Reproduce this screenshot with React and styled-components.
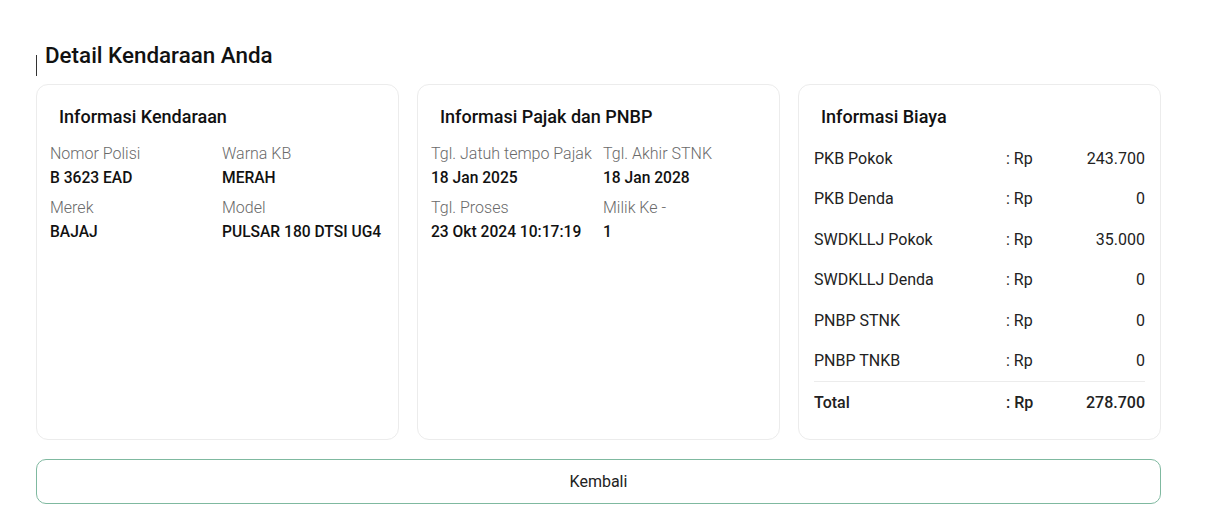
import React from "react";
import styled, { createGlobalStyle } from "styled-components";

const GlobalStyle = createGlobalStyle`
  body {
    margin: 0;
    background: #ffffff;
    font-family: Roboto, "Liberation Sans", Arial, sans-serif;
    color: #111111;
  }
`;

const vehicle = [
  { label: "Nomor Polisi", value: "B 3623 EAD" },
  { label: "Warna KB", value: "MERAH" },
  { label: "Merek", value: "BAJAJ" },
  { label: "Model", value: "PULSAR 180 DTSI UG4" },
];

const tax = [
  { label: "Tgl. Jatuh tempo Pajak", value: "18 Jan 2025" },
  { label: "Tgl. Akhir STNK", value: "18 Jan 2028" },
  { label: "Tgl. Proses", value: "23 Okt 2024 10:17:19" },
  { label: "Milik Ke -", value: "1" },
];

const costs = [
  { label: "PKB Pokok", amount: "243.700" },
  { label: "PKB Denda", amount: "0" },
  { label: "SWDKLLJ Pokok", amount: "35.000" },
  { label: "SWDKLLJ Denda", amount: "0" },
  { label: "PNBP STNK", amount: "0" },
  { label: "PNBP TNKB", amount: "0" },
];

export default function App() {
  return (
    <>
      <GlobalStyle />
      <Page>
        <Header>
          <Caret />
          <Title>Detail Kendaraan Anda</Title>
        </Header>
        <Cards>
          <Card>
            <CardTitle>Informasi Kendaraan</CardTitle>
            <FieldGrid>
              {vehicle.map((f) => (
                <Field key={f.label}>
                  <Label>{f.label}</Label>
                  <Value>{f.value}</Value>
                </Field>
              ))}
            </FieldGrid>
          </Card>
          <Card>
            <CardTitle>Informasi Pajak dan PNBP</CardTitle>
            <FieldGrid>
              {tax.map((f) => (
                <Field key={f.label}>
                  <Label>{f.label}</Label>
                  <Value>{f.value}</Value>
                </Field>
              ))}
            </FieldGrid>
          </Card>
          <Card>
            <CardTitle>Informasi Biaya</CardTitle>
            <CostTable>
              {costs.map((c) => (
                <CostRow key={c.label}>
                  <span>{c.label}</span>
                  <span>: Rp</span>
                  <Amount>{c.amount}</Amount>
                </CostRow>
              ))}
              <CostRow $total>
                <span>Total</span>
                <span>: Rp</span>
                <Amount>278.700</Amount>
              </CostRow>
            </CostTable>
          </Card>
        </Cards>
        <BackButton type="button">Kembali</BackButton>
      </Page>
    </>
  );
}

const Page = styled.div`
  padding: 40px 59px 10px 36px;
  display: flex;
  flex-direction: column;
`;

const Header = styled.div`
  display: flex;
  align-items: flex-start;
  height: 44px;
`;

const Caret = styled.span`
  width: 1px;
  height: 21px;
  margin-top: 15px;
  margin-right: 8px;
  background: #333;
`;

const Title = styled.h1`
  margin: 1px 0 0;
  font-size: 22.4px;
  font-weight: 500;
  line-height: 28px;
  color: #111;
`;

const Cards = styled.div`
  display: grid;
  grid-template-columns: repeat(3, 1fr);
  gap: 18px;
`;

const Card = styled.div`
  border: 1px solid #ececec;
  border-radius: 12px;
  padding: 20px 13px 24px 13px;
  height: 356px;
  box-sizing: border-box;
`;

const CardTitle = styled.h2`
  margin: 0 0 13px 9px;
  font-size: 18px;
  font-weight: 500;
  line-height: 24px;
  color: #111;
`;

const FieldGrid = styled.div`
  display: grid;
  grid-template-columns: 172px 1fr;
  row-gap: 6px;
`;

const Field = styled.div`
  display: flex;
  flex-direction: column;
`;

const Label = styled.span`
  font-size: 16px;
  font-weight: 300;
  color: #6a6a6a;
  line-height: 24px;
  white-space: nowrap;
`;

const Value = styled.span`
  font-size: 15.6px;
  font-weight: 500;
  color: #111;
  line-height: 24px;
  white-space: nowrap;
`;

const CostTable = styled.div`
  display: flex;
  flex-direction: column;
  padding: 0 2px;
  margin-top: -4px;
`;

const CostRow = styled.div`
  display: grid;
  grid-template-columns: 192px 1fr auto;
  align-items: center;
  height: 40.5px;
  font-size: 16px;
  color: #222;
  font-weight: ${(p) => (p.$total ? 500 : 400)};
  border-top: ${(p) => (p.$total ? "1px solid #ececec" : "none")};
`;

const Amount = styled.span`
  text-align: right;
`;

const BackButton = styled.button`
  margin-top: 19px;
  height: 45px;
  border: 1px solid #7fb9a0;
  border-radius: 10px;
  background: #fff;
  font-family: Roboto, "Liberation Sans", Arial, sans-serif;
  font-size: 16px;
  color: #222;
  cursor: pointer;
`;
